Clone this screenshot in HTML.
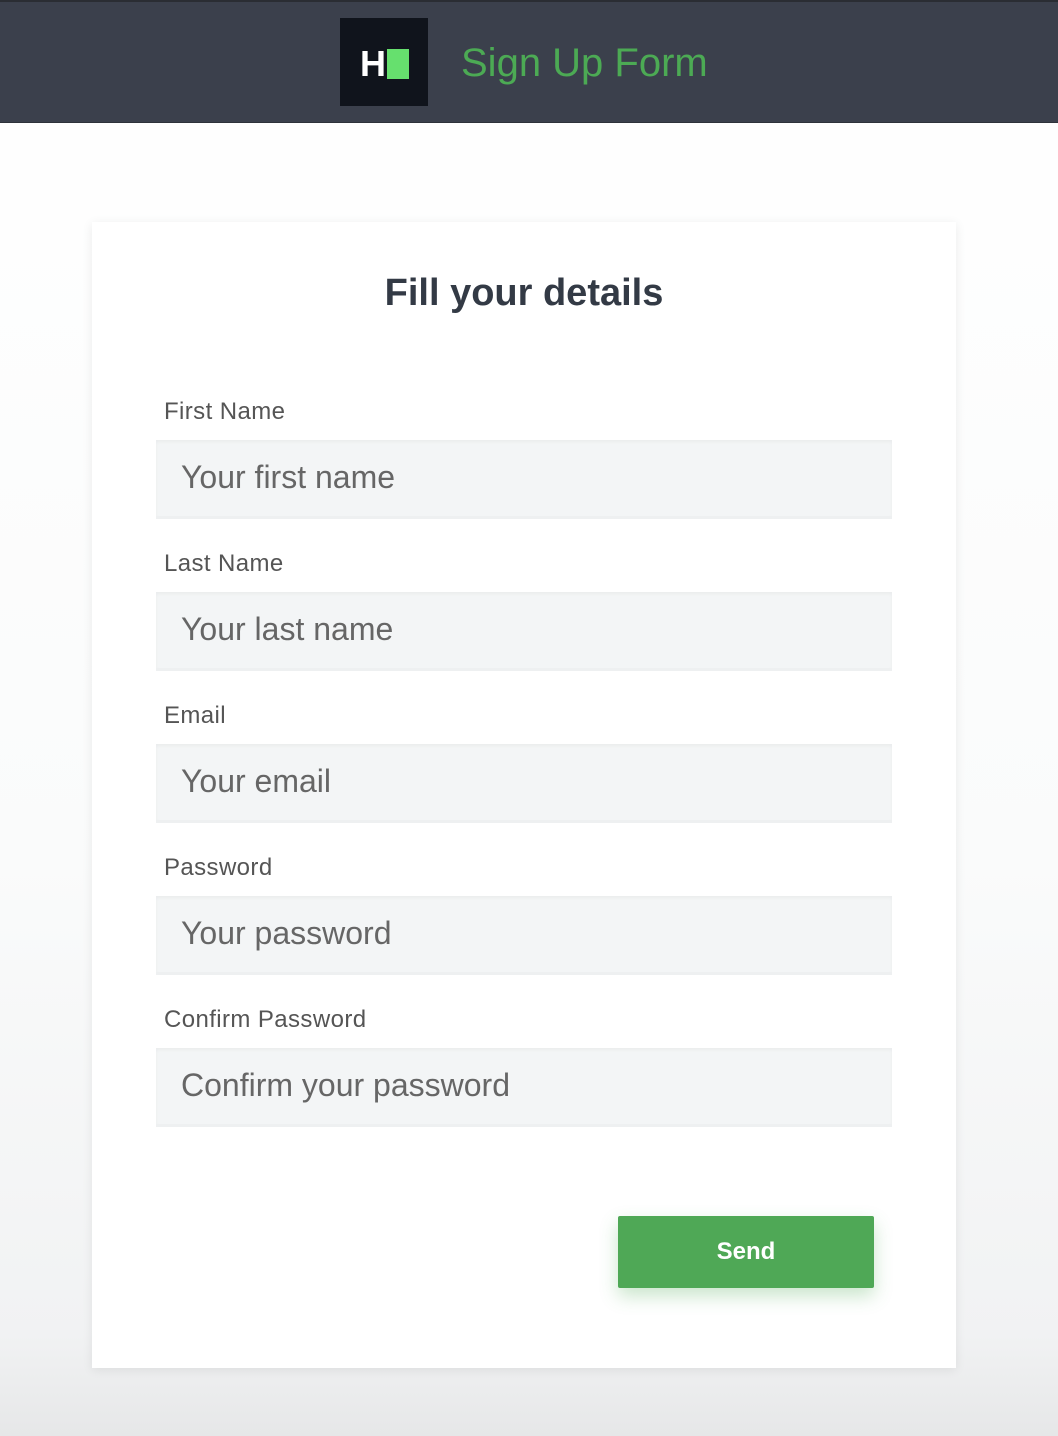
<!DOCTYPE html>
<html><head><style>
html,body{margin:0;padding:0}
body{width:1058px;height:1436px;background:linear-gradient(#fff 0%,#fafbfb 60%,#f1f2f3 93%,#e6e7e8 100%);font-family:"Liberation Sans",sans-serif;position:relative;overflow:hidden}
.hdr{position:absolute;left:0;top:0;width:1058px;height:120px;background:#3b404c;border-top:2px solid #2a2d33;border-bottom:1px solid #2e323a}
.logo{position:absolute;left:340px;top:16px;width:88px;height:88px;background:#10141c}
.logo .h{position:absolute;left:20px;top:28px;color:#fff;font-weight:bold;font-size:36px;line-height:36px;letter-spacing:-1px}
.logo .g{position:absolute;left:47px;top:31px;width:22px;height:30px;background:#66e06e}
.title{position:absolute;left:461px;top:36px;color:#4caa54;font-size:40px;line-height:50px}
.card{position:absolute;left:92px;top:222px;width:864px;height:1146px;background:#fff;box-shadow:0 2px 10px rgba(0,0,0,.08)}
h1{position:absolute;left:0;width:864px;top:46px;margin:0;text-align:center;font-size:38px;font-weight:bold;color:#333a45;line-height:50px}
.lbl{position:absolute;left:72px;font-size:24px;letter-spacing:0.4px;color:#555;line-height:28px}
.inp{position:absolute;left:64px;width:736px;height:76px;background:#f3f5f6;border-bottom:3px solid #eef0f1;box-shadow:inset 0 2px 3px rgba(0,0,0,.04)}
.inp span{position:absolute;left:25px;top:18px;font-size:32px;color:#666;line-height:38px}
.btn{position:absolute;left:526px;top:994px;width:256px;height:72px;background:#4fa856;border-radius:2px;color:#fff;font-weight:bold;font-size:24px;text-align:center;line-height:72px;box-shadow:0 8px 18px rgba(76,170,84,.3)}
</style></head><body>
<div class="hdr"><div class="logo"><span class="h">H</span><div class="g"></div></div><div class="title">Sign Up Form</div></div>
<div class="card">
<h1>Fill your details</h1>
<div class="lbl" style="top:176px">First Name</div>
<div class="inp" style="top:218px"><span>Your first name</span></div>
<div class="lbl" style="top:328px">Last Name</div>
<div class="inp" style="top:370px"><span>Your last name</span></div>
<div class="lbl" style="top:480px">Email</div>
<div class="inp" style="top:522px"><span>Your email</span></div>
<div class="lbl" style="top:632px">Password</div>
<div class="inp" style="top:674px"><span>Your password</span></div>
<div class="lbl" style="top:784px">Confirm Password</div>
<div class="inp" style="top:826px"><span>Confirm your password</span></div>
<div class="btn">Send</div>
</div>
</body></html>
